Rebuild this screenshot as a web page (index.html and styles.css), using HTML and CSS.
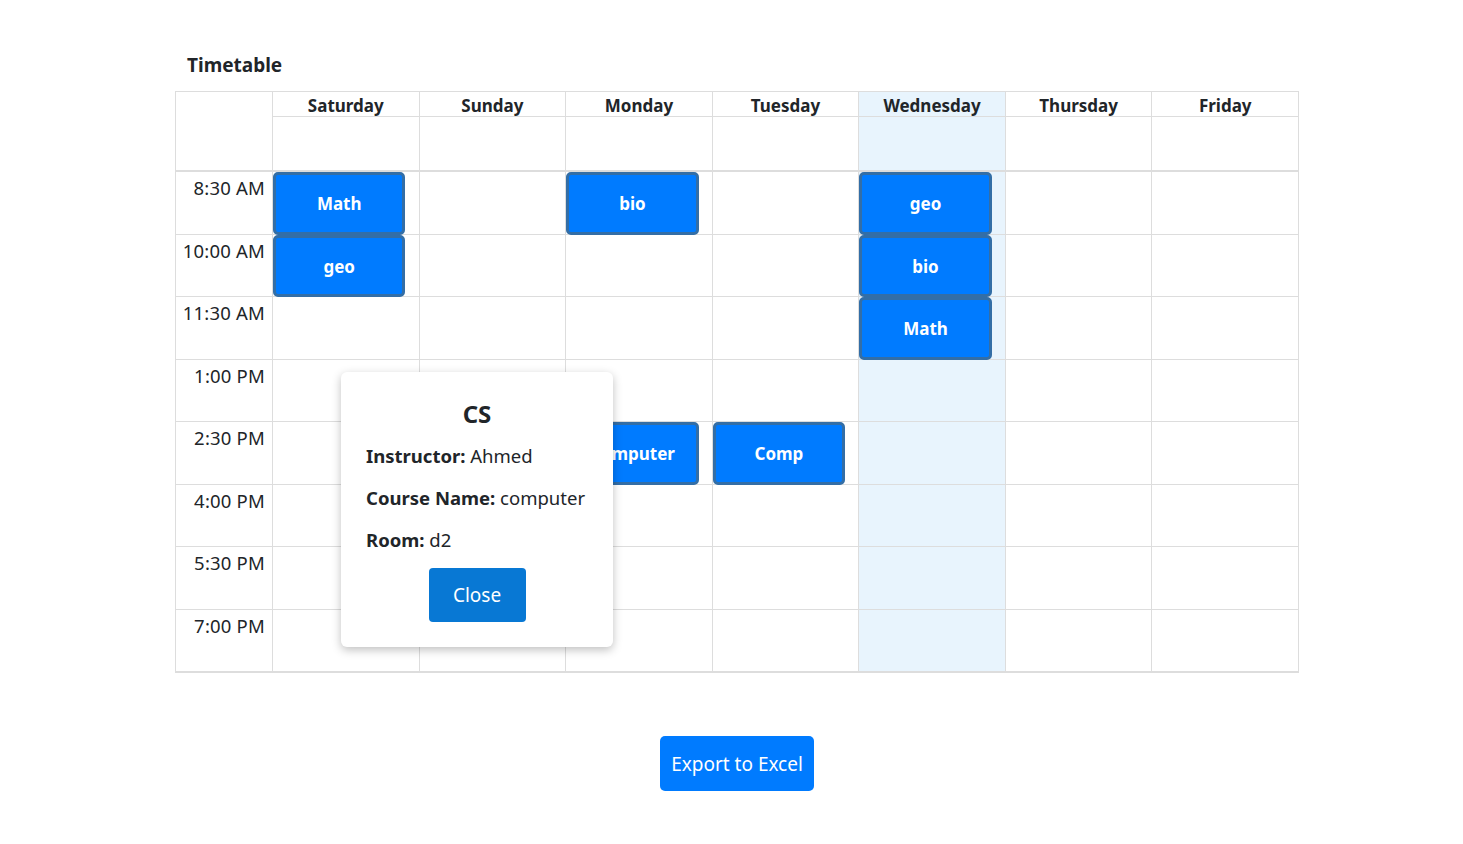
FILE: index.html
```html
<!DOCTYPE html>
<html lang="en">
<head>
<meta charset="utf-8">
<title>Timetable</title>
<link rel="stylesheet" href="styles.css">
</head>
<body>
<div class="page">
  <h5 class="title">Timetable</h5>
  <div class="calendar-wrap">
    <div class="calendar">
      <div class="axis-head"></div>
      <div class="day-head">Saturday</div>
      <div class="day-head">Sunday</div>
      <div class="day-head">Monday</div>
      <div class="day-head">Tuesday</div>
      <div class="day-head today">Wednesday</div>
      <div class="day-head">Thursday</div>
      <div class="day-head last">Friday</div>

      <div class="allday"></div>
      <div class="allday"></div>
      <div class="allday"></div>
      <div class="allday"></div>
      <div class="allday today"></div>
      <div class="allday"></div>
      <div class="allday last"></div>

      <div class="time">8:30 AM</div>
      <div class="slot"><div class="event">Math</div></div>
      <div class="slot"></div>
      <div class="slot"><div class="event">bio</div></div>
      <div class="slot"></div>
      <div class="slot today"><div class="event">geo</div></div>
      <div class="slot"></div>
      <div class="slot last"></div>

      <div class="time">10:00 AM</div>
      <div class="slot"><div class="event">geo</div></div>
      <div class="slot"></div>
      <div class="slot"></div>
      <div class="slot"></div>
      <div class="slot today"><div class="event">bio</div></div>
      <div class="slot"></div>
      <div class="slot last"></div>

      <div class="time">11:30 AM</div>
      <div class="slot"></div>
      <div class="slot"></div>
      <div class="slot"></div>
      <div class="slot"></div>
      <div class="slot today"><div class="event">Math</div></div>
      <div class="slot"></div>
      <div class="slot last"></div>

      <div class="time">1:00 PM</div>
      <div class="slot"></div>
      <div class="slot"></div>
      <div class="slot"></div>
      <div class="slot"></div>
      <div class="slot today"></div>
      <div class="slot"></div>
      <div class="slot last"></div>

      <div class="time">2:30 PM</div>
      <div class="slot"></div>
      <div class="slot"></div>
      <div class="slot"><div class="event">Computer</div></div>
      <div class="slot"><div class="event">Comp</div></div>
      <div class="slot today"></div>
      <div class="slot"></div>
      <div class="slot last"></div>

      <div class="time">4:00 PM</div>
      <div class="slot"></div>
      <div class="slot"></div>
      <div class="slot"></div>
      <div class="slot"></div>
      <div class="slot today"></div>
      <div class="slot"></div>
      <div class="slot last"></div>

      <div class="time">5:30 PM</div>
      <div class="slot"></div>
      <div class="slot"></div>
      <div class="slot"></div>
      <div class="slot"></div>
      <div class="slot today"></div>
      <div class="slot"></div>
      <div class="slot last"></div>

      <div class="time bottom">7:00 PM</div>
      <div class="slot bottom"></div>
      <div class="slot bottom"></div>
      <div class="slot bottom"></div>
      <div class="slot bottom"></div>
      <div class="slot bottom today"></div>
      <div class="slot bottom"></div>
      <div class="slot bottom last"></div>
    </div>

    <div class="popup">
      <h4 class="popup-title">CS</h4>
      <p class="popup-line"><strong>Instructor:</strong> Ahmed</p>
      <p class="popup-line"><strong>Course Name:</strong> computer</p>
      <p class="popup-line"><strong>Room:</strong> d2</p>
      <div class="popup-actions"><button class="btn-close">Close</button></div>
    </div>
  </div>

  <div class="actions">
    <button class="btn-export">Export to Excel</button>
  </div>
</div>
</body>
</html>
```

FILE: styles.css
```css
* { box-sizing: border-box; }

body {
  margin: 0;
  background: #fff;
  color: #212529;
  font-family: "Noto Sans", "Open Sans", sans-serif;
}

.page {
  padding: 53px 164px 0 175px;
}

.title {
  margin: 0 0 13px 12px;
  font-size: 19px;
  font-weight: 700;
  line-height: 25px;
}

.calendar-wrap {
  position: relative;
  width: 1124px;
}

.calendar {
  display: grid;
  grid-template-columns: 97px repeat(7, 1fr);
  grid-template-rows: 25px 55px repeat(8, 62.5px);
  border-left: 1px solid #ddd;
  border-top: 1px solid #ddd;
  border-bottom: 1px solid #ddd;
}

.axis-head {
  grid-row: 1 / span 2;
  border-right: 1px solid #ddd;
  border-bottom: 2px solid #ddd;
}

.day-head {
  border-right: 1px solid #ddd;
  border-bottom: 1px solid #ddd;
  text-align: center;
  font-weight: 700;
  font-size: 17px;
  line-height: 24px;
  padding-top: 2px;
}

.allday {
  border-right: 1px solid #ddd;
  border-bottom: 2px solid #ddd;
}

.today { background: #e8f4fd; }

.time {
  border-right: 1px solid #ddd;
  border-bottom: 1px solid #ddd;
  text-align: right;
  padding: 4px 7px 0 0;
  font-size: 18.5px;
  line-height: 24px;
  letter-spacing: 0.2px;
}

.slot {
  position: relative;
  border-right: 1px solid #ddd;
  border-bottom: 1px solid #ddd;
}

.event {
  position: relative;
  z-index: 1;
  width: 91%;
  height: calc(100% + 1px);
  display: flex;
  align-items: center;
  justify-content: center;
  background: #007bff;
  border: 3px solid #336ea6;
  border-radius: 5px;
  color: #fff;
  font-weight: 700;
  font-size: 17px;
  padding-top: 1px;
}

.popup {
  position: absolute;
  z-index: 5;
  left: 166px;
  top: 281px;
  width: 272px;
  height: 275px;
  background: #fff;
  border-radius: 6px;
  box-shadow: 0 3px 10px rgba(0, 0, 0, 0.25);
  padding: 26px 25px 0 25px;
}

.popup-title {
  margin: 0 0 14px 0;
  text-align: center;
  font-size: 24px;
  font-weight: 700;
  line-height: 32px;
}

.popup-line {
  margin: 0 0 18px 0;
  font-size: 18.5px;
  line-height: 24px;
  color: #212529;
}

.popup-line strong { font-weight: 700; }

.popup-actions {
  display: flex;
  justify-content: center;
  margin-top: -2px;
}

.btn-close {
  width: 97px;
  height: 54px;
  border: none;
  border-radius: 4px;
  background: #0878d4;
  color: #fff;
  font-family: inherit;
  font-size: 19px;
}

.actions {
  display: flex;
  justify-content: center;
  width: 1124px;
  margin-top: 63px;
}

.btn-export {
  width: 154px;
  height: 55px;
  border: none;
  border-radius: 5px;
  background: #007bff;
  color: #fff;
  font-family: inherit;
  font-size: 19px;
}
```
